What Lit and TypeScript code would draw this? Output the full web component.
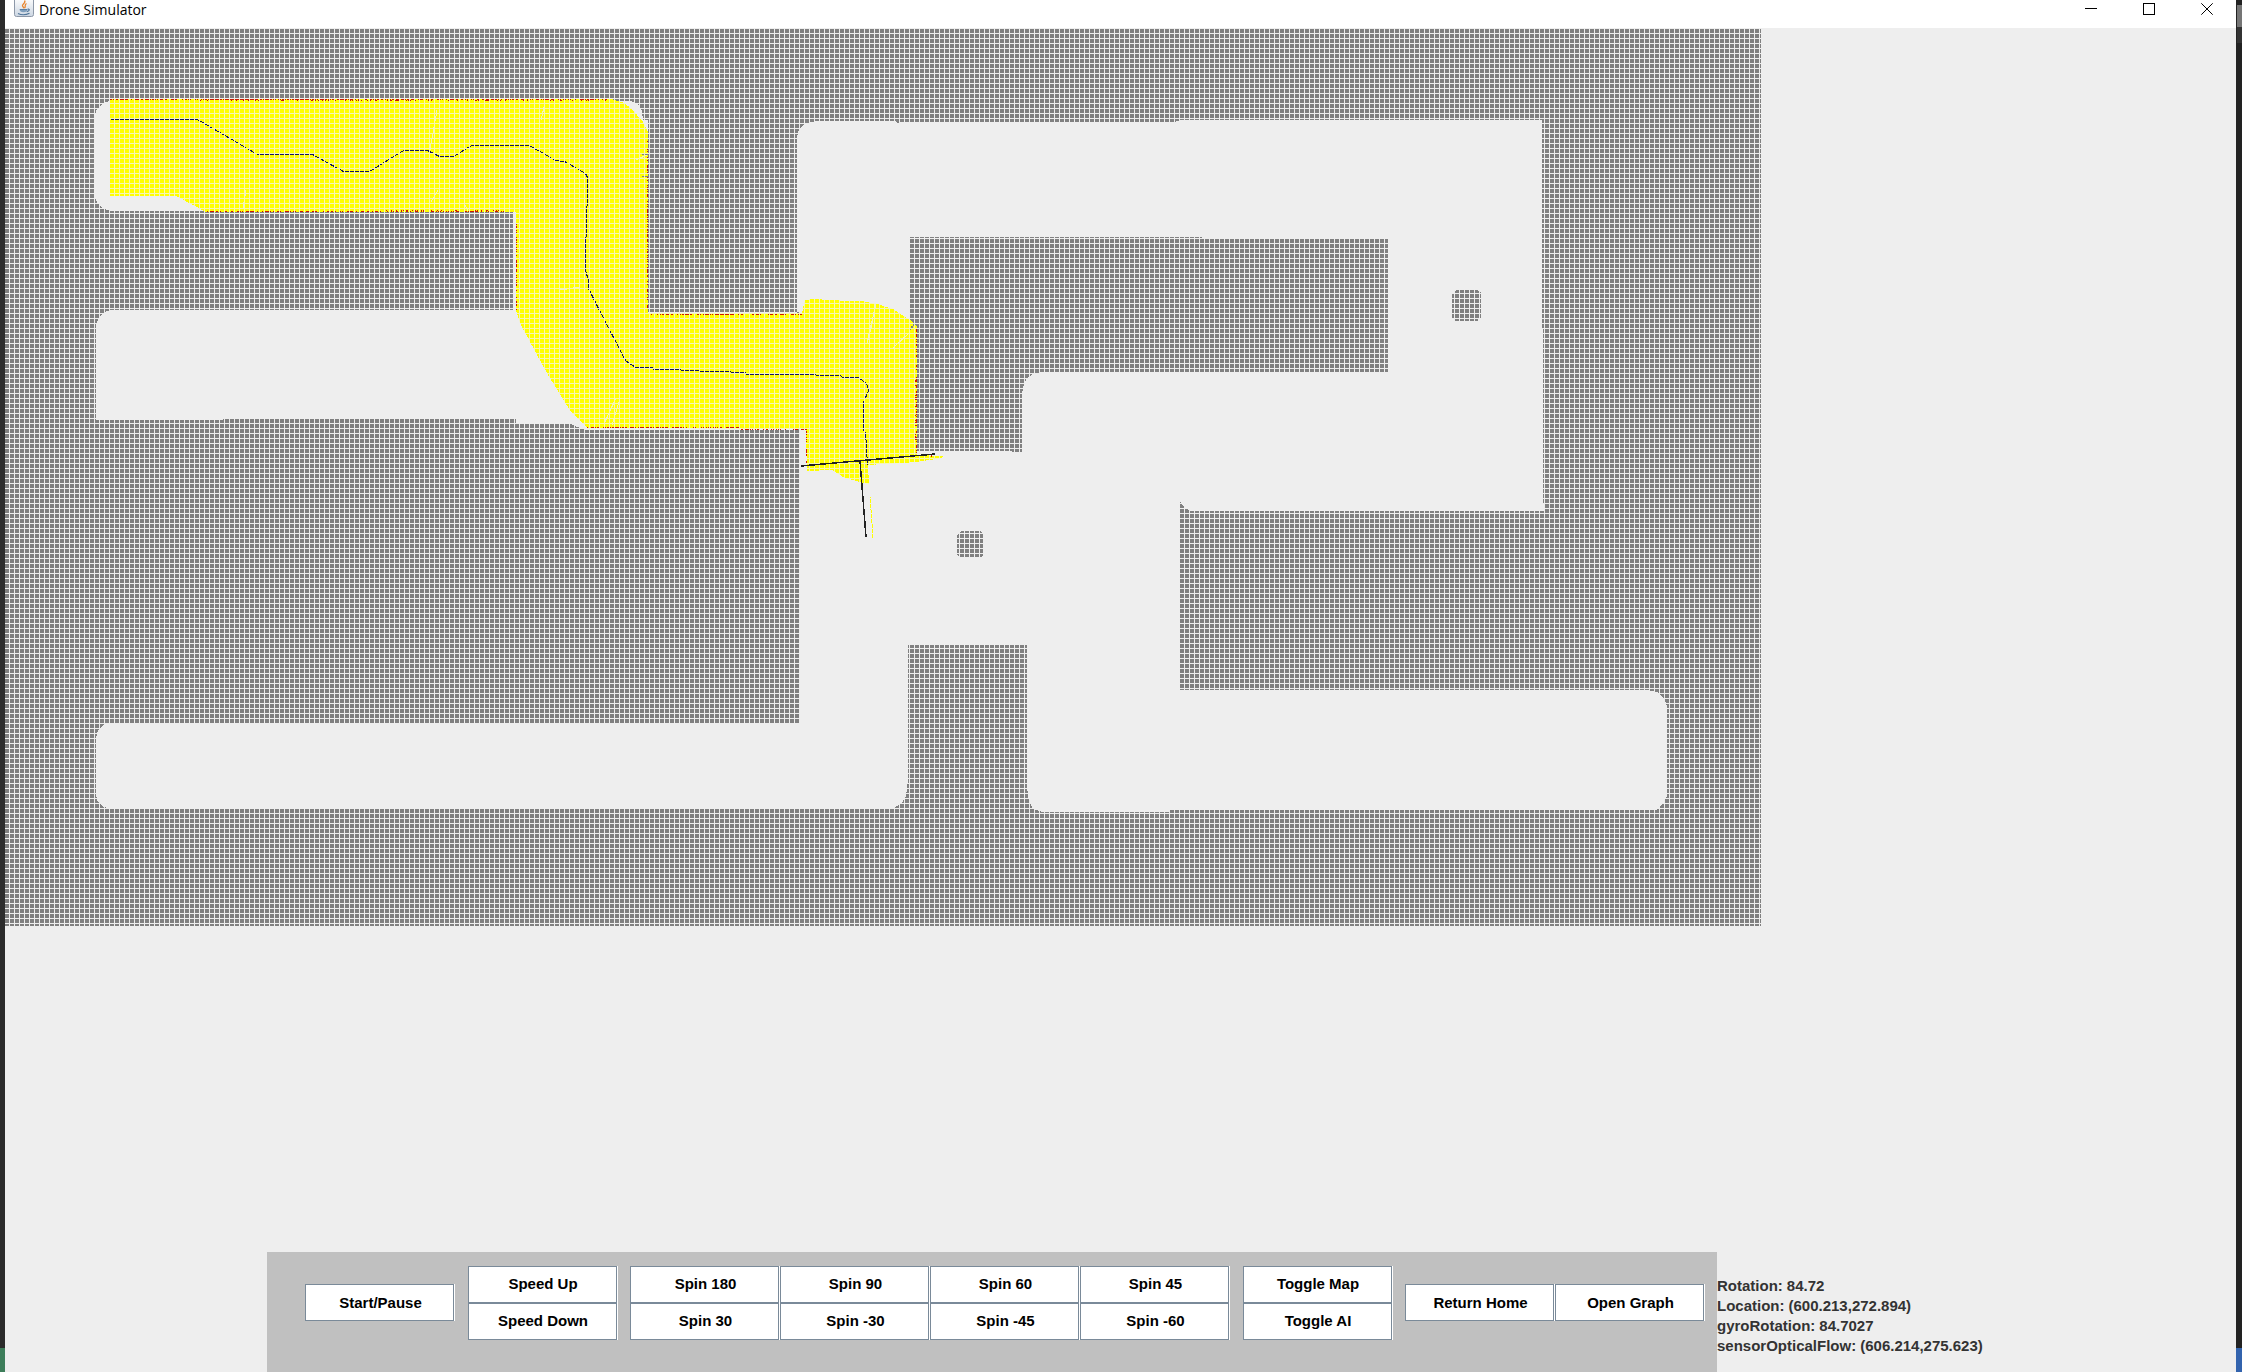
import { LitElement, html, svg, css } from "lit";
import { customElement, property } from "lit/decorators.js";

type Edge = { x: number; y: number; length: number; vertical: boolean; density: number };

// Walls the lidar has hit; each is drawn as a scatter of one-pixel marks.
const hitEdges: Edge[] = [
  { x: 110, y: 99, length: 100, vertical: false, density: 0.55 },
  { x: 210, y: 99, length: 150, vertical: false, density: 0.8 },
  { x: 360, y: 99, length: 250, vertical: false, density: 0.6 },
  { x: 200, y: 100, length: 420, vertical: false, density: 0.18 },
  { x: 206, y: 211, length: 304, vertical: false, density: 0.5 },
  { x: 380, y: 210, length: 130, vertical: false, density: 0.3 },
  { x: 647, y: 138, length: 174, vertical: true, density: 0.5 },
  { x: 516, y: 224, length: 86, vertical: true, density: 0.4 },
  { x: 650, y: 314, length: 152, vertical: false, density: 0.6 },
  { x: 585, y: 427, length: 96, vertical: false, density: 0.7 },
  { x: 681, y: 427, length: 60, vertical: false, density: 0.6 },
  { x: 741, y: 429, length: 65, vertical: false, density: 0.6 },
  { x: 916, y: 328, length: 126, vertical: true, density: 0.6 },
  { x: 915, y: 380, length: 60, vertical: true, density: 0.3 },
  { x: 806, y: 429, length: 38, vertical: true, density: 0.6 },
  { x: 931, y: 454, length: 3, vertical: true, density: 1 },
];

function scatter(edges: Edge[]): string {
  let seed = 20117;
  const next = () => {
    seed = (seed * 1103515245 + 12345) % 2147483648;
    return seed / 2147483648;
  };
  let d = "";
  for (const e of edges) {
    for (let i = 0; i < e.length; i++) {
      if (next() < e.density) {
        d += e.vertical ? `M${e.x} ${e.y + i}h1v1h-1z` : `M${e.x + i} ${e.y}h1v1h-1z`;
      }
    }
  }
  return d;
}

// One-pixel lines every five pixels, between the map cells.
function gridLines(left: number, top: number, right: number, bottom: number): string {
  let d = "";
  for (let x = left; x < right; x += 5) d += `M${x} ${top}h1V${bottom}h-1z`;
  for (let y = top; y < bottom; y += 5) d += `M${left} ${y}H${right}v1H${left}z`;
  return d;
}

const hits = scatter(hitEdges);
const grid = gridLines(4, 28, 1761, 926);

const corridors = [
  // upper left room and the shaft leading down from it
  "M94 117L97 109L103 103L110 101H631L638 104L642 111L643 120H648V312H797V430H585L568 423H516V419H223V420H96V325L99 317L104 312L112 310H513V211H110L102 208L97 202L94 196Z",
  // upper right room, the central hall and the lower corridors
  "M797 137L799 129L804 124L817 121H895L900 124V122H1175L1180 120H1542V328H1543V503H1544V511H1191L1185 508L1180 501V690H1647L1657 692L1664 698L1667 706V796L1663 804L1656 810H1170V812H1042L1033 809L1029 801L1027 788V645H908V780L906 796L901 804L892 809H110L102 806L97 800L96 794V738L98 730L103 725L112 723H799V312H797Z",
];

const blocks = [
  "M910 237H1202V239H1388V372H1042L1033 374L1027 378L1024 384L1022 394V452H1012V451H910Z",
  "M1456 290H1477L1479 292H1481V319H1478V321H1455L1454 319H1452V294L1454 292Z",
  "M961 531H980L983 534V555L981 557H959L957 555V535Z",
];

const scanned =
  "M110 99H611L622 102L631 108L643 122L648 132V313H802L805 300L813 299L847 301L862 301L877 304L893 309L910 320L917 327V455L943 456L942 458L917 462L868 465L869 484L860 482L843 477L832 470L807 471L806 429H741L681 428H588L571 412L551 380L536 353L520 323L516 310V212H206L176 196H110Z";

const flightPath =
  "110,119 197,119 257,154 312,154 343,171 369,171 403,150 427,150 439,156 453,156 471,145 529,145 555,160 564,161 585,173 587,177 586,236 585,237 585,270 588,280 588,288 599,310 625,360 635,367 652,367 653,369 680,369 681,370 715,371 745,372 746,374 790,374 840,375 842,377 858,377 866,383 868,390 863,402 863,430 865,432 866,447 867,465";

@customElement("drone-map")
export class DroneMap extends LitElement {
  static styles = css`
    :host {
      display: block;
    }
    .map {
      display: block;
      shape-rendering: crispEdges;
    }
    .wall {
      fill: #808080;
    }
    .free {
      fill: #eeeeee;
    }
    .scan {
      fill: #ffff00;
    }
    .ray {
      fill: none;
      stroke: #ffff00;
    }
    .scratch {
      fill: none;
      stroke: #f6f6b0;
    }
    .hit {
      fill: #cc1800;
    }
    .path {
      fill: none;
      stroke: #14145a;
    }
    .grid {
      fill: #eeeeee;
    }
    .grid-scan {
      fill: #f5f5b8;
    }
    .sensor {
      fill: none;
      stroke: #222222;
      stroke-width: 1.5;
    }
  `;

  render() {
    return html`
      <svg class="map" width="1756" height="898" viewBox="5 28 1756 898" role="img" aria-label="Drone map">
        <defs>
          <clipPath id="scanned"><path d=${scanned}></path></clipPath>
        </defs>
        <rect class="wall" x="5" y="28" width="1756" height="898"></rect>
        ${corridors.map((d) => svg`<path class="free" d=${d}></path>`)}
        ${blocks.map((d) => svg`<path class="wall" d=${d}></path>`)}
        <path class="scan" d=${scanned}></path>
        <path class="ray" d="M869 484L871 510L873 538"></path>
        <path
          class="scratch"
          d="M876 304L867 343M873 320L868 340M612 425L619 402M604 424L616 398M545 103L541 120M243 208L246 190M437 110L430 150M438 190L431 202M465 205L468 211M560 290L580 287M636 160L647 155M910 332L893 348"
        ></path>
        <path class="hit" d=${hits}></path>
        <path class="wall" d="M913 324H915V326H913V328H911V330H909V328H911V326H913ZM642 154H648V155H642ZM642 176H648V177H642Z"></path>
        <polyline class="path" points=${flightPath} transform="translate(0.5 0.5)"></polyline>
        <path class="grid" d=${grid}></path>
        <g clip-path="url(#scanned)"><path class="grid-scan" d=${grid}></path></g>
        <path class="sensor" d="M801 466L935 454M860 461L866 537"></path>
      </svg>
    `;
  }
}

@customElement("title-bar")
export class TitleBar extends LitElement {
  @property() heading = "";

  static styles = css`
    :host {
      display: flex;
      align-items: flex-start;
      height: 28px;
      padding-left: 9px;
      background: #ffffff;
      color: #000000;
    }
    .logo {
      flex: none;
    }
    .heading {
      flex: 1;
      margin: 0 0 0 5px;
      font: 400 14px/20px "Open Sans", "Noto Sans", sans-serif;
    }
    .control {
      width: 58px;
      height: 18px;
      padding: 0;
      border: 0;
      background: none;
      display: flex;
      align-items: center;
      justify-content: center;
    }
    .glyph {
      fill: none;
      stroke: #000000;
    }
  `;

  render() {
    return html`
      <svg class="logo" width="20" height="18" viewBox="0 3 20 18" aria-hidden="true">
        <defs>
          <linearGradient id="plate" x1="0" y1="0" x2="0" y2="1">
            <stop offset="0" stop-color="#ffffff"></stop>
            <stop offset="1" stop-color="#ccd6e2"></stop>
          </linearGradient>
        </defs>
        <rect x="0.5" y="0.5" width="19" height="19" rx="2" fill="url(#plate)" stroke="#8d98a8"></rect>
        <path d="M10.5 3.5C12.5 6 7.500 7 8.500 9C9 10 10 10.500 10 11.500M12.500 6.500C10 8 12 9 10.800 11" fill="none" stroke="#e8852e" stroke-width="1.300"></path>
        <path d="M5.500 12H13.500C13.500 14 12 15.300 9.500 15.300S5.500 14 5.500 12Z" fill="#7f9fbd"></path>
        <path d="M13.500 12.300C16 11.500 16 14 12.800 14.600M4 16.500C7 18 12 18 15.500 16.300" fill="none" stroke="#4f7599" stroke-width="1.100"></path>
        <path d="M6 12.500H13" stroke="#4f7599" stroke-width="0.800"></path>
      </svg>
      <h1 class="heading">${this.heading}</h1>
      <button class="control" aria-label="Minimize">
        <svg class="glyph" width="12" height="12" viewBox="0 0 12 12"><path d="M0 5.500H12"></path></svg>
      </button>
      <button class="control" aria-label="Maximize">
        <svg class="glyph" width="12" height="12" viewBox="0 0 12 12"><rect x="0.5" y="0.5" width="11" height="11"></rect></svg>
      </button>
      <button class="control" aria-label="Close">
        <svg class="glyph" width="12" height="12" viewBox="0 0 12 12"><path d="M0.300 0.300L11.700 11.700M11.700 0.300L0.300 11.700"></path></svg>
      </button>
    `;
  }
}

@customElement("app-root")
export class AppRoot extends LitElement {
  private groups: string[][][] = [
    [["Start/Pause"]],
    [["Speed Up"], ["Speed Down"]],
    [
      ["Spin 180", "Spin 90", "Spin 60", "Spin 45"],
      ["Spin 30", "Spin -30", "Spin -45", "Spin -60"],
    ],
    [["Toggle Map"], ["Toggle AI"]],
    [["Return Home", "Open Graph"]],
  ];

  private readings: [string, string][] = [
    ["Rotation", "84.72"],
    ["Location", "(600.213,272.894)"],
    ["gyroRotation", "84.7027"],
    ["sensorOpticalFlow", "(606.214,275.623)"],
  ];

  static styles = css`
    :host {
      display: flex;
      min-height: 100vh;
      font-family: "Liberation Sans", Arial, sans-serif;
    }
    .edge {
      flex: none;
      display: flex;
      flex-direction: column;
      justify-content: space-between;
    }
    .edge-left {
      width: 5px;
      background: #2b2b2b;
    }
    .edge-right {
      width: 6px;
      background: #222222;
    }
    .tab {
      height: 22px;
      margin: 5px 0 0 1px;
      background: #757575;
      border-bottom: 16px solid #333333;
    }
    .corner {
      height: 24px;
    }
    .corner-green {
      margin-top: auto;
      background: #3d7d5a;
    }
    .corner-blue {
      background: #3263ad;
    }
    .window {
      flex: 1;
      min-width: 0;
      display: flex;
      flex-direction: column;
      background: #eeeeee;
    }
    .footer {
      display: flex;
      height: 120px;
      margin-top: auto;
      padding-left: 262px;
    }
    .panel {
      flex: 0 0 1450px;
      box-sizing: border-box;
      display: flex;
      justify-content: space-between;
      padding: 13px 12px 32px 38px;
      background: #c0c0c0;
    }
    .group {
      display: flex;
      flex-direction: column;
      justify-content: center;
    }
    .row {
      display: flex;
    }
    .action {
      box-sizing: border-box;
      width: 149px;
      height: 37px;
      margin: 0 1px 0 0;
      padding: 0 0 0 2px;
      border: 1px solid #7a8a99;
      border-radius: 0;
      background: #ffffff;
      box-shadow: 1px 0 #ffffff;
      color: #000000;
      font: 700 15px/20px "Liberation Sans", Arial, sans-serif;
    }
    .readings {
      margin: 0;
      padding-top: 24px;
      color: #333333;
      font-size: 15px;
      font-weight: 700;
      line-height: 20px;
    }
    .reading {
      display: flex;
      gap: 4px;
    }
    .value {
      margin: 0;
    }
  `;

  render() {
    return html`
      <div class="edge edge-left"><div class="corner corner-green"></div></div>
      <main class="window">
        <title-bar heading="Drone Simulator"></title-bar>
        <drone-map></drone-map>
        <div class="footer">
          <div class="panel">
            ${this.groups.map(
              (group) => html`<div class="group">
                ${group.map(
                  (row) => html`<div class="row">
                    ${row.map((label) => html`<button class="action">${label}</button>`)}
                  </div>`
                )}
              </div>`
            )}
          </div>
          <dl class="readings">
            ${this.readings.map(
              ([name, value]) => html`<div class="reading">
                <dt>${name}:</dt>
                <dd class="value">${value}</dd>
              </div>`
            )}
          </dl>
        </div>
      </main>
      <div class="edge edge-right">
        <div class="tab"></div>
        <div class="corner corner-blue"></div>
      </div>
    `;
  }
}
